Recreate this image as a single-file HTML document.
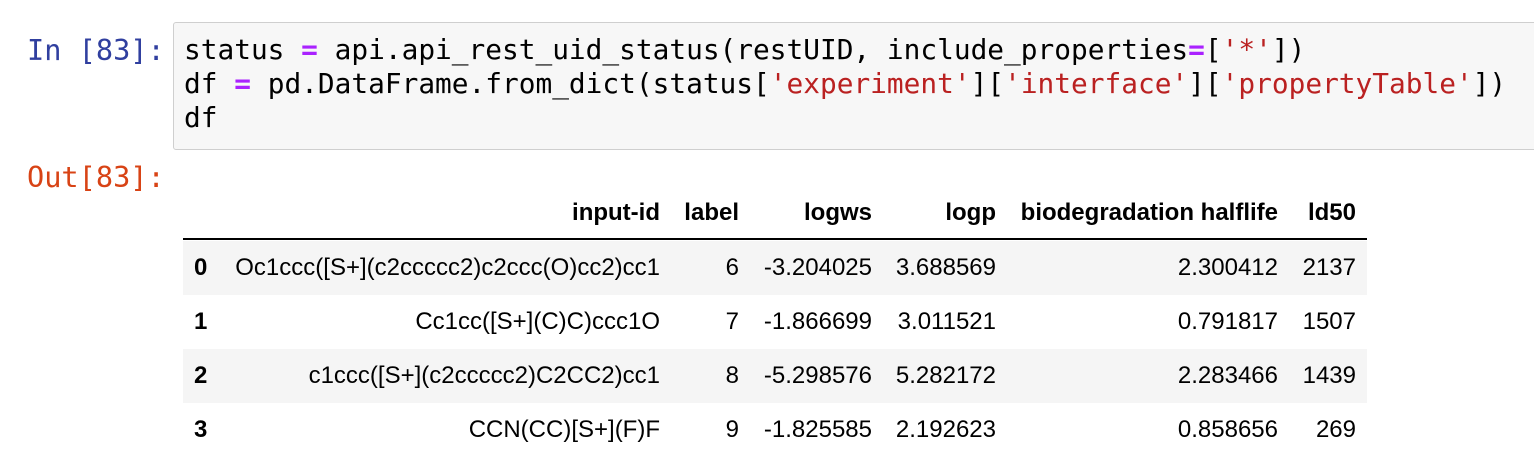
<!DOCTYPE html>
<html><head><meta charset="utf-8"><style>
body{margin:0;width:1534px;height:468px;background:#fff;position:relative;overflow:hidden}
.p{position:absolute;font-family:"DejaVu Sans Mono","Liberation Mono",monospace;font-size:28.6px;line-height:34px}
.code{position:absolute;left:173px;top:22px;width:1380px;height:126px;background:#f7f7f7;border:1px solid #cfcfcf;border-radius:3px}
.c{position:absolute;left:184px;font-family:"DejaVu Sans Mono","Liberation Mono",monospace;font-size:27.8px;line-height:34px;color:#000;white-space:pre}
.o{color:#aa22ff;font-weight:bold}.s{color:#ba2121}
.t{position:absolute;font-family:"Liberation Sans",Arial,sans-serif;font-size:24px;color:#000;white-space:nowrap;text-align:right;line-height:28px}
.h{font-weight:bold}
.band{position:absolute;left:183px;width:1184px;height:54px;background:#f5f5f5}
</style></head><body>
<div class="p" style="left:27px;top:33px;color:#303f9f">In [83]:</div>
<div class="code"></div>
<div class="c" style="top:33px">status <span class="o">=</span> api.api_rest_uid_status(restUID, include_properties<span class="o">=</span>[<span class="s">'*'</span>])</div>
<div class="c" style="top:67px">df <span class="o">=</span> pd.DataFrame.from_dict(status[<span class="s">'experiment'</span>][<span class="s">'interface'</span>][<span class="s">'propertyTable'</span>])</div>
<div class="c" style="top:101px">df</div>
<div class="p" style="left:27px;top:160px;color:#d84315">Out[83]:</div>

<div class="band" style="top:241px"></div>
<div class="band" style="top:349px"></div>
<div style="position:absolute;left:183px;top:238px;width:1184px;height:2px;background:#000"></div>

<div id="tbl"></div>
<script>
var rights=[660,739,872,996,1278,1356];
var hdr=["input-id","label","logws","logp","biodegradation halflife","ld50"];
var rows=[["Oc1ccc([S+](c2ccccc2)c2ccc(O)cc2)cc1","6","-3.204025","3.688569","2.300412","2137"],
["Cc1cc([S+](C)C)ccc1O","7","-1.866699","3.011521","0.791817","1507"],
["c1ccc([S+](c2ccccc2)C2CC2)cc1","8","-5.298576","5.282172","2.283466","1439"],
["CCN(CC)[S+](F)F","9","-1.825585","2.192623","0.858656","269"]];
var h='';
function cell(txt,r,top,cls){h+='<div class="t '+cls+'" style="right:'+(1534-r)+'px;top:'+top+'px">'+txt+'</div>';}
hdr.forEach(function(x,i){cell(x,rights[i],199,'h');});
rows.forEach(function(row,j){var top=254+j*54;
h+='<div class="t h" style="left:194px;top:'+top+'px;text-align:left">'+j+'</div>';
row.forEach(function(x,i){cell(x,rights[i],top,'');});});
document.getElementById('tbl').innerHTML=h;
</script>
</body></html>
